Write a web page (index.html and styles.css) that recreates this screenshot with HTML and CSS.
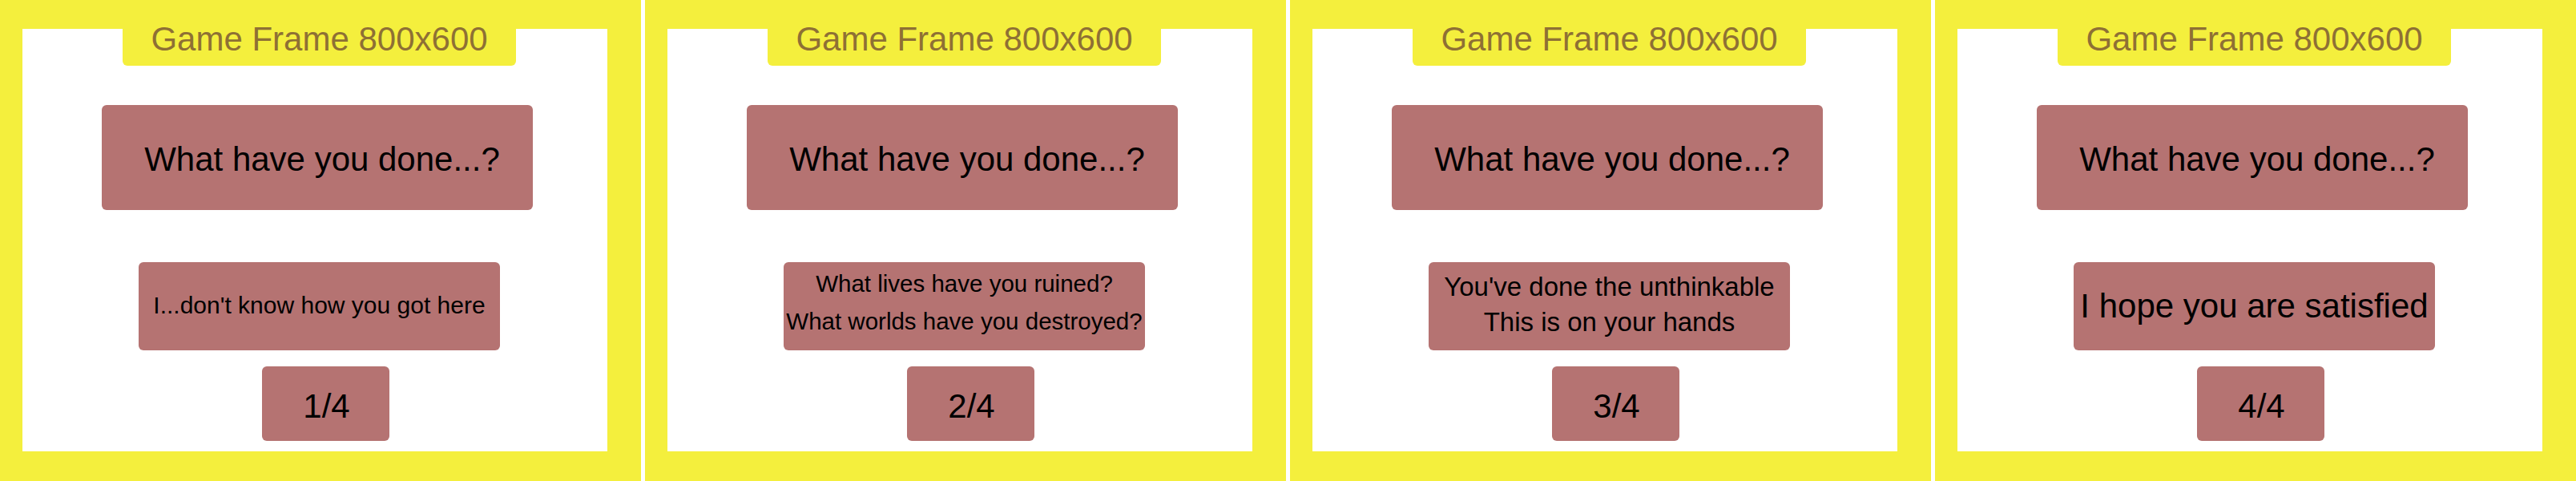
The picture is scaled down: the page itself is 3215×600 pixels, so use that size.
FILE: index.html
```html
<!DOCTYPE html>
<html lang="en">
<head>
<meta charset="utf-8">
<title>Game Frames</title>
<link rel="stylesheet" href="styles.css">
</head>
<body>
  <div class="panel">
    <div class="screen">
      <div class="tab">Game Frame 800x600</div>
      <div class="question">What have you done...?</div>
      <div class="reply reply-one"><div class="line">I...don't know how you got here</div></div>
      <div class="counter">1/4</div>
    </div>
  </div>
  <div class="panel">
    <div class="screen">
      <div class="tab">Game Frame 800x600</div>
      <div class="question">What have you done...?</div>
      <div class="reply reply-two">
        <div class="line">What lives have you ruined?</div>
        <div class="line">What worlds have you destroyed?</div>
      </div>
      <div class="counter">2/4</div>
    </div>
  </div>
  <div class="panel">
    <div class="screen">
      <div class="tab">Game Frame 800x600</div>
      <div class="question">What have you done...?</div>
      <div class="reply reply-three">
        <div class="line">You've done the unthinkable</div>
        <div class="line">This is on your hands</div>
      </div>
      <div class="counter">3/4</div>
    </div>
  </div>
  <div class="panel">
    <div class="screen">
      <div class="tab">Game Frame 800x600</div>
      <div class="question">What have you done...?</div>
      <div class="reply reply-four"><div class="line">I hope you are satisfied</div></div>
      <div class="counter">4/4</div>
    </div>
  </div>
</body>
</html>
```
FILE: styles.css
```css
html, body {
  margin: 0;
  padding: 0;
  background: #ffffff;
}

body {
  display: flex;
  gap: 5px;
  font-family: "Liberation Sans", Arial, sans-serif;
  color: #000000;
}

.panel {
  flex: none;
  width: 800px;
  height: 600px;
  box-sizing: border-box;
  padding: 36px 42px 37px 28px;
  background: #f4ef3d;
}

.screen {
  height: 527px;
  background: #ffffff;
  display: flex;
  flex-direction: column;
  align-items: flex-start;
}

.tab {
  margin: -36px 0 0 125px;
  width: 491px;
  height: 82px;
  box-sizing: border-box;
  padding-top: 26px;
  background: #f4ef3d;
  border-radius: 0 0 6px 6px;
  text-align: center;
  font-size: 42px;
  line-height: 46px;
  color: #8e7034;
  white-space: nowrap;
}

.question,
.reply,
.counter {
  box-sizing: border-box;
  background: #b57372;
  border-radius: 6px;
  display: flex;
  flex-direction: column;
  align-items: center;
  justify-content: center;
  white-space: nowrap;
}

.question {
  margin: 49px 0 0 99px;
  width: 538px;
  height: 131px;
  padding: 4px 0 0 12px;
  font-size: 42px;
}

.reply {
  margin: 65px 0 0 145px;
  width: 451px;
  height: 110px;
}

.reply-one {
  font-size: 30px;
  padding-bottom: 3px;
}

.reply-two {
  font-size: 29.5px;
  line-height: 34px;
  gap: 13px;
  padding-bottom: 10px;
}

.reply-three {
  font-size: 33px;
  line-height: 38px;
  gap: 6px;
  padding-bottom: 5px;
}

.reply-four {
  font-size: 42px;
}

.counter {
  margin: 20px 0 0 299px;
  width: 159px;
  height: 93px;
  padding: 6px 0 0 2px;
  font-size: 42px;
}
```
